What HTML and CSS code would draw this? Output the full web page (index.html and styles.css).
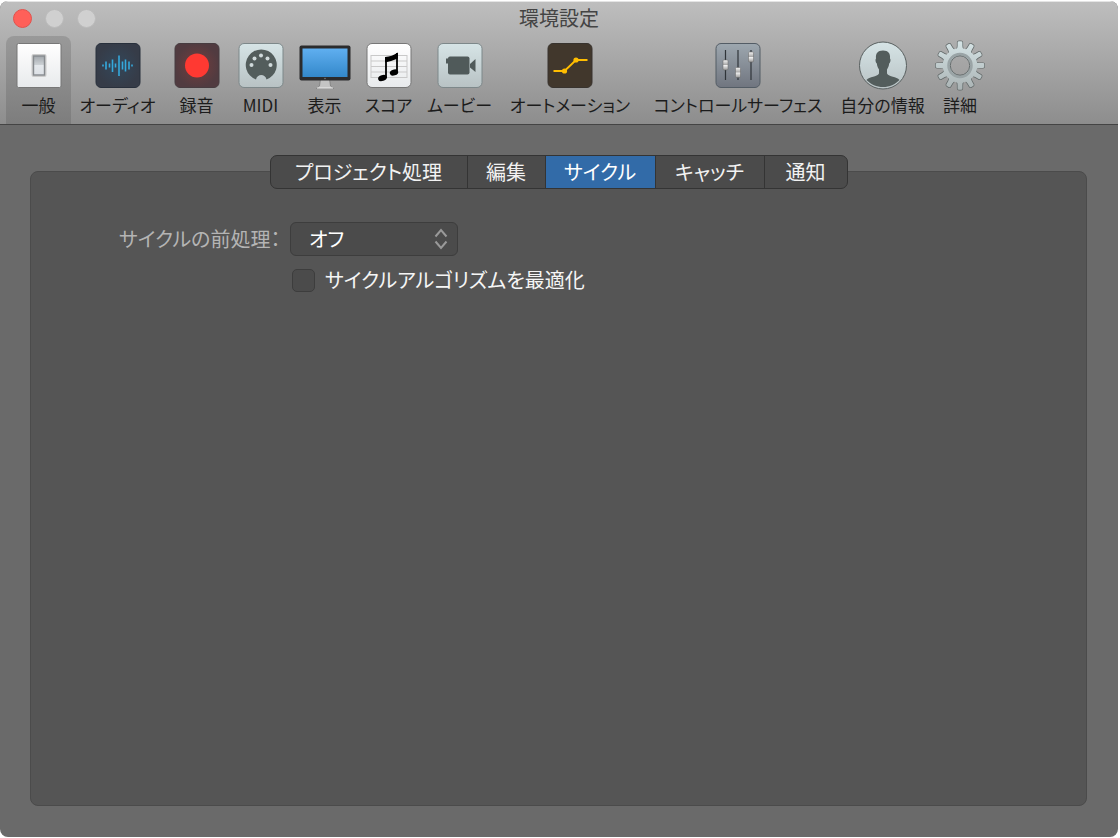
FILE: index.html
```html
<!DOCTYPE html>
<html lang="ja">
<head>
  <meta charset="UTF-8">
  <meta name="viewport" content="width=device-width, initial-scale=1.0">
  <title>環境設定</title>
  <link rel="stylesheet" href="styles.css">
</head>
<body>
  <div class="window">
    <header>
      <div class="titlebar">
        <div class="lights">
          <button class="light close" aria-label="閉じる"></button>
          <button class="light" aria-label="しまう" disabled></button>
          <button class="light" aria-label="拡大" disabled></button>
        </div>
        <h1>環境設定</h1>
      </div>
      <nav class="toolbar">
        <button class="tool selected">
          <svg viewBox="0 0 52 52">
            <defs>
              <linearGradient id="white" x2="0" y2="1"><stop stop-color="#fff"/><stop offset="1" stop-color="#e8eaec"/></linearGradient>
              <linearGradient id="pale" x2="0" y2="1"><stop stop-color="#d6e4e6"/><stop offset="1" stop-color="#b8c2c4"/></linearGradient>
              <linearGradient id="blue" x2="0" y2="1"><stop stop-color="#60aff0"/><stop offset="1" stop-color="#3388ca"/></linearGradient>
              <linearGradient id="slate" x2="0" y2="1"><stop stop-color="#9da7af"/><stop offset="1" stop-color="#70757f"/></linearGradient>
              <linearGradient id="switch" x2="0" y2="1"><stop stop-color="#a2a7ac"/><stop offset=".45" stop-color="#cbd0d4"/><stop offset=".5" stop-color="#e4e8ec"/><stop offset="1" stop-color="#dde1e6"/></linearGradient>
              <linearGradient id="knob" x2="0" y2="1"><stop stop-color="#f5f5f5"/><stop offset=".45" stop-color="#aaa"/><stop offset=".55" stop-color="#eee"/><stop offset="1" stop-color="#999"/></linearGradient>
              <radialGradient id="navy"><stop stop-color="#33475a"/><stop offset="1" stop-color="#363c48"/></radialGradient>
              <radialGradient id="maroon"><stop stop-color="#743d3d"/><stop offset="1" stop-color="#513b40"/></radialGradient>
            </defs>
            <rect x="4" y="4.500" width="44" height="44" rx="1.500" fill="url(#white)" stroke="#777" stroke-width="1"/>
            <rect x="18.500" y="15" width="15" height="23" rx="2" fill="#ccc"/>
            <rect x="20.500" y="17" width="11" height="19" fill="url(#switch)" stroke="#878b8f" stroke-width="1.400"/>
          </svg>
          <span>一般</span>
        </button>
        <button class="tool">
          <svg viewBox="0 0 52 52">
            <rect x="4" y="4.500" width="44" height="44" rx="5" fill="url(#navy)" stroke="#28303c"/>
            <path d="M11 25.500v2M14 22.500v8M17.500 24.500v4M20.500 20.500v12.500M23.500 24.500v4M27 16.500v20.500M30.500 22.500v8M33.500 20.500v12M37 22.500v8M40 25.500v2" stroke="#35a9dc" stroke-width="1.600"/>
          </svg>
          <span>オーディオ</span>
        </button>
        <button class="tool">
          <svg viewBox="0 0 52 52">
            <rect x="4" y="4.500" width="44" height="44" rx="5" fill="url(#maroon)" stroke="#473c40"/>
            <circle cx="26" cy="26.500" r="12" fill="#ff3932"/>
          </svg>
          <span>録音</span>
        </button>
        <button class="tool">
          <svg viewBox="0 0 52 52">
            <rect x="4" y="4.500" width="44" height="44" rx="5" fill="url(#pale)" stroke="#7d888a"/>
            <path d="M21 40.500A15.500 15.500 0 1 1 31.500 40.500C30.500 34.500 22 34.500 21 40.500Z" fill="#535d5c"/>
            <g fill="#d0dadb"><circle cx="16.500" cy="26" r="2"/><circle cx="19.500" cy="19.500" r="2"/><circle cx="26" cy="16.500" r="2"/><circle cx="32.500" cy="19.500" r="2"/><circle cx="35.500" cy="26" r="2"/></g>
          </svg>
          <span>MIDI</span>
        </button>
        <button class="tool">
          <svg viewBox="0 0 52 52">
            <path d="M21.500 40h9l1 7 3 2.500h-17l3-2.500z" fill="#c4c4c4" stroke="#777" stroke-width=".7"/>
            <path d="M18 49h16" stroke="#ededed"/>
            <rect x=".5" y="6.500" width="51" height="35" rx="2" fill="#2b2b2c"/>
            <rect x="3.500" y="9.500" width="45" height="28.500" fill="url(#blue)"/>
            <circle cx="26" cy="39.500" r=".7" fill="#888"/>
          </svg>
          <span>表示</span>
        </button>
        <button class="tool">
          <svg viewBox="0 0 52 52">
            <rect x="4" y="4.500" width="44" height="44" rx="5" fill="url(#white)" stroke="#777"/>
            <path d="M8 16.500h36M8 22h36M8 27.500h36M8 33h36M8 38.500h36M8 16v23M44 16v23" stroke="#c9c9c9" fill="none"/>
            <path d="M23 18v21M34 14v20" stroke="#000" stroke-width="1.800" fill="none"/>
            <path d="M22.100 18Q29 17.500 34.900 13.500V19.500Q29 22 22.100 23.500Z"/>
            <ellipse cx="19.500" cy="39" rx="4.500" ry="3" transform="rotate(-18 19.500 39)"/>
            <ellipse cx="31" cy="33.500" rx="4.300" ry="3" transform="rotate(-18 31 33.500)"/>
          </svg>
          <span>スコア</span>
        </button>
        <button class="tool">
          <svg viewBox="0 0 52 52">
            <rect x="4" y="4.500" width="44" height="44" rx="5" fill="url(#pale)" stroke="#7d888a"/>
            <g fill="#505a5a"><rect x="14" y="17.500" width="21.500" height="18" rx="2"/><rect x="12" y="19.500" width="3" height="5"/><path d="M36 25l5.500-5v13L36 28.500z"/></g>
          </svg>
          <span>ムービー</span>
        </button>
        <button class="tool">
          <svg viewBox="0 0 52 52">
            <rect x="4" y="4.500" width="44" height="44" rx="5" fill="#41372c" stroke="#38332e"/>
            <path d="M9.500 32H20.500L32 21H43.500" fill="none" stroke="#ffbd00" stroke-width="1.800"/>
            <g fill="#ffbd00"><circle cx="20.500" cy="32" r="2.600"/><circle cx="32" cy="21" r="2.600"/></g>
          </svg>
          <span>オートメーション</span>
        </button>
        <button class="tool">
          <svg viewBox="0 0 52 52">
            <rect x="4" y="4.500" width="44" height="44" rx="5" fill="url(#slate)" stroke="#535c65"/>
            <path d="M13.500 11v30M26 11v30M39 11v30" stroke="#2f3439" stroke-width="1.200"/>
            <g fill="url(#knob)" stroke="#666" stroke-width=".5"><rect x="11" y="21" width="5" height="10" rx="1"/><rect x="23.500" y="28.500" width="5" height="10" rx="1"/><rect x="36.500" y="13" width="5" height="10" rx="1"/></g>
          </svg>
          <span>コントロールサーフェス</span>
        </button>
        <button class="tool">
          <svg viewBox="0 0 52 52">
            <circle cx="26" cy="26.500" r="23.500" fill="url(#pale)" stroke="#596060"/>
            <path d="M26 11.500c5.500 0 7.500 3 7 8 1 1 .5 4-.8 5-.4 3-1.200 4.500-2.200 6v4c2 3.500 9.500 3 12.500 6.500C38 45.500 32.500 48 26 48S14 45.500 9.500 41C12.500 37.500 20 38 22 34.500v-4c-1-1.500-1.800-3-2.200-6-1.300-1-1.800-4-.8-5-.5-5 1.500-8 7-8z" fill="#535d5c"/>
          </svg>
          <span>自分の情報</span>
        </button>
        <button class="tool">
          <svg viewBox="0 0 52 52">
            <defs>
              <linearGradient id="metal" gradientUnits="userSpaceOnUse" x1="0" y1="2" x2="0" y2="51"><stop stop-color="#d6e4e6"/><stop offset="1" stop-color="#aab3b4"/></linearGradient>
              <path id="tooth" d="M22 11.500Q23.600 9.500 23.600 7V3.500Q23.600 2.200 25 2.200h2Q28.400 2.200 28.400 3.500V7Q28.400 9.500 30 11.500z"/>
              <mask id="gear">
                <circle cx="26" cy="26.500" r="13.500" fill="none" stroke="#fff" stroke-width="7.500"/>
                <g fill="#fff">
                  <use href="#tooth"/>
                  <use href="#tooth" transform="rotate(30 26 26.500)"/>
                  <use href="#tooth" transform="rotate(60 26 26.500)"/>
                  <use href="#tooth" transform="rotate(90 26 26.500)"/>
                  <use href="#tooth" transform="rotate(120 26 26.500)"/>
                  <use href="#tooth" transform="rotate(150 26 26.500)"/>
                  <use href="#tooth" transform="rotate(180 26 26.500)"/>
                  <use href="#tooth" transform="rotate(210 26 26.500)"/>
                  <use href="#tooth" transform="rotate(240 26 26.500)"/>
                  <use href="#tooth" transform="rotate(270 26 26.500)"/>
                  <use href="#tooth" transform="rotate(300 26 26.500)"/>
                  <use href="#tooth" transform="rotate(330 26 26.500)"/>
                </g>
              </mask>
            </defs>
            <g fill="none" stroke="#626969" stroke-width="1.400">
              <use href="#tooth"/>
              <use href="#tooth" transform="rotate(30 26 26.500)"/>
              <use href="#tooth" transform="rotate(60 26 26.500)"/>
              <use href="#tooth" transform="rotate(90 26 26.500)"/>
              <use href="#tooth" transform="rotate(120 26 26.500)"/>
              <use href="#tooth" transform="rotate(150 26 26.500)"/>
              <use href="#tooth" transform="rotate(180 26 26.500)"/>
              <use href="#tooth" transform="rotate(210 26 26.500)"/>
              <use href="#tooth" transform="rotate(240 26 26.500)"/>
              <use href="#tooth" transform="rotate(270 26 26.500)"/>
              <use href="#tooth" transform="rotate(300 26 26.500)"/>
              <use href="#tooth" transform="rotate(330 26 26.500)"/>
            </g>
            <rect width="52" height="52" fill="url(#metal)" mask="url(#gear)"/>
            <circle cx="26" cy="26.500" r="11.500" fill="none" stroke="#9aa4a6" stroke-width="2.500"/>
            <circle cx="26" cy="26.500" r="9.700" fill="none" stroke="#666d6e"/>
          </svg>
          <span>詳細</span>
        </button>
      </nav>
    </header>
    <main>
      <div class="tabs">
        <button>プロジェクト処理</button>
        <button>編集</button>
        <button class="active">サイクル</button>
        <button>キャッチ</button>
        <button>通知</button>
      </div>
      <form class="panel">
        <div class="row">
          <label class="name" for="preprocess">サイクルの前処理：</label>
          <div class="select">
            <select id="preprocess">
              <option>オフ</option>
            </select>
            <svg viewBox="0 0 14 22"><path d="M1.500 8.500L7 2l5.500 6.500M1.500 13.500L7 20l5.500-6.500"/></svg>
          </div>
        </div>
        <div class="row check">
          <input type="checkbox" id="optimize">
          <label for="optimize">サイクルアルゴリズムを最適化</label>
        </div>
      </form>
    </main>
  </div>
</body>
</html>
```
FILE: styles.css
```css
* {
  box-sizing: border-box;
}

body {
  margin: 1px 2px 1px 0;
  background-color: white;
  font-family: "Noto Sans CJK JP", sans-serif;
  font-feature-settings: "palt";
}

button, select {
  padding: 0;
  border: none;
  font: inherit;
  font-feature-settings: inherit;
}

.window {
  display: flex;
  flex-direction: column;
  min-height: calc(100vh - 2px);
  border-radius: 8px;
  background-color: #6a6a6a;
  overflow: hidden;
}

header {
  background: linear-gradient(#bebebe, #8d8d8d);
  border-top: 1px solid #e4e4e4;
  border-bottom: 1px solid #444;
}

.titlebar {
  display: grid;
  grid-template-columns: 1fr auto 1fr;
  align-items: center;
  height: 34px;
  padding-bottom: 2px;
}

.lights {
  display: flex;
  gap: 13px;
  padding-left: 13px;
}

.light {
  width: 19px;
  height: 19px;
  border: 1px solid #bbb;
  border-radius: 50%;
  background-color: #d0d0d0;
}

.close {
  border-color: #e0524d;
  background-color: #ff6059;
}

h1 {
  margin: 0;
  color: #444;
  font-size: 20px;
  font-weight: 400;
  line-height: 32px;
}

.toolbar {
  display: grid;
  grid-template-columns: 65px 93px 65px 63px 65px 63px 79px 142px 194px 95px 60px;
  padding-left: 6px;
}

.tool {
  display: flex;
  flex-direction: column;
  align-items: center;
  height: 88px;
  padding-top: 3px;
  border-radius: 8px 8px 0 0;
  background: none;
  color: #1c1c1c;
  font-size: 17px;
  line-height: 28px;
  white-space: nowrap;
}

.tool svg {
  width: 52px;
  height: 52px;
}

.selected {
  background: linear-gradient(#999, #7d7d7d);
}

main {
  flex: 1;
  display: flex;
  flex-direction: column;
  padding: 30px 31px 31px 30px;
}

.tabs {
  position: relative;
  display: grid;
  grid-template-columns: 197px 78px 110px 109px 82px;
  align-self: center;
  height: 34px;
  margin-bottom: -18px;
  border: 1px solid #343434;
  border-radius: 7px;
  background-color: #4b4b4b;
  overflow: hidden;
}

.tabs button {
  border-right: 1px solid #343434;
  background: none;
  color: #f2f2f2;
  font-size: 20px;
  line-height: 32px;
}

.tabs button:last-child {
  border-right: none;
}

.tabs .active {
  background-color: #326ba8;
  color: white;
}

.panel {
  flex: 1;
  padding: 50px 0 0 88px;
  border: 1px solid #4b4b4b;
  border-radius: 8px;
  background-color: #555;
}

.row {
  display: flex;
  align-items: center;
  color: #f5f5f5;
  font-size: 20px;
  line-height: 32px;
}

.name {
  width: 171px;
  color: #b4b4b4;
}

.select {
  position: relative;
}

select {
  appearance: none;
  display: block;
  width: 168px;
  height: 34px;
  padding-left: 18px;
  border: 1px solid #3d3d3d;
  border-radius: 6px;
  background-color: #4b4b4b;
  color: white;
}

.select svg {
  position: absolute;
  top: 6px;
  right: 10px;
  width: 14px;
  height: 22px;
  fill: none;
  stroke: #999;
  stroke-width: 2;
  pointer-events: none;
}

.check {
  gap: 10px;
  margin-top: 8px;
  padding-left: 173px;
}

input[type="checkbox"] {
  appearance: none;
  width: 23px;
  height: 23px;
  margin: 0;
  border: 1px solid #3d3d3d;
  border-radius: 5px;
  background-color: #4b4b4b;
}

input[type="checkbox"]:checked {
  background-color: #326ba8;
}
```
